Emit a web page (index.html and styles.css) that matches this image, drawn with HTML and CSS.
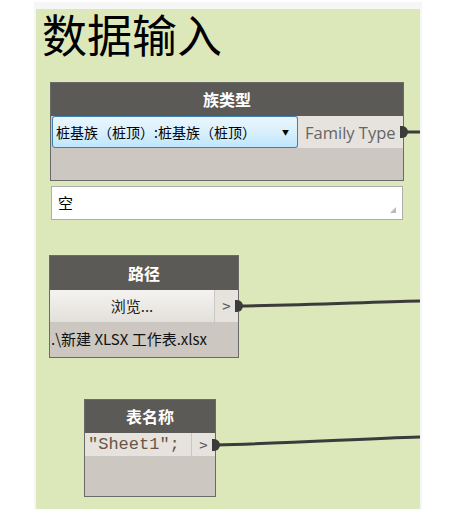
FILE: index.html
```html
<!DOCTYPE html>
<html lang="zh">
<head>
<meta charset="UTF-8" />
<title>数据输入</title>
<link rel="stylesheet" href="styles.css">
</head>
<body>
  <!-- Cadre du groupe -->
  <div class="group">
    <div class="canvas">
      <h1 class="group-title">数据输入</h1>

      <!-- Fils entre noeuds -->
      <svg class="wires" width="384" height="500">
        <path d="M367 123 L384 123" />
        <path d="M202 297 C280 296 330 293 384 292" />
        <path d="M179 436 C260 434 320 430 384 428" />
      </svg>

      <!-- Noeud famille -->
      <div class="node node-family">
        <div class="node-header">族类型</div>
        <div class="node-row">
          <div class="dropdown">
            <span>桩基族（桩顶）:桩基族（桩顶）</span>
            <span class="caret">&#9660;</span>
          </div>
          <div class="port-label">Family Type</div>
          <span class="port"></span>
        </div>
      </div>

      <!-- Zone de texte -->
      <div class="textbox">空<span class="grip"></span></div>

      <!-- Noeud chemin -->
      <div class="node node-path">
        <div class="node-header">路径</div>
        <div class="node-row">
          <div class="browse">浏览...</div>
          <div class="out">&gt;</div>
          <span class="port"></span>
        </div>
        <div class="node-value">.\新建 XLSX 工作表.xlsx</div>
      </div>

      <!-- Noeud nom de feuille -->
      <div class="node node-sheet">
        <div class="node-header">表名称</div>
        <div class="node-row">
          <div class="code">"Sheet1";</div>
          <div class="out">&gt;</div>
          <span class="port"></span>
        </div>
      </div>
    </div>
  </div>
</body>
</html>
```

FILE: styles.css
```css
/* ===== Global ===== */
html, body {
  margin: 0;
  background: #fff;
  font-family: "Noto Sans CJK SC", "Noto Sans", sans-serif;
}
/* Cadre gris + fond vert */
.group {
  margin: 2px 0 0 34px;
  width: 384px;
  padding: 7px 2px 0 2px;
  background: #f6f6f6;
}
.canvas {
  position: relative;
  width: 384px;
  height: 500px;
  background: #dde8ba;
}
.group-title {
  margin: 0;
  padding: 0 0 0 6px;
  font-size: 45px;
  font-weight: normal;
  line-height: 50px;
  color: #000;
}
/* Fils */
.wires {
  position: absolute;
  left: 0;
  top: 0;
}
.wires path {
  fill: none;
  stroke: #3b3b3b;
  stroke-width: 3;
}
/* Noeuds */
.node {
  position: absolute;
  background: #ccc7c0;
  border: 1px solid #6a6a6a;
  box-sizing: border-box;
}
.node-header {
  height: 33px;
  line-height: 33px;
  background: #5c5a57;
  color: #fff;
  text-align: center;
  font-size: 16px;
  font-weight: bold;
}
.node-row {
  position: relative;
  display: flex;
  height: 32px;
}
.port {
  position: absolute;
  right: -5px;
  top: 10px;
  width: 8px;
  height: 12px;
  border-radius: 0 6px 6px 0;
  background: #3b3b3b;
}
.node-family {
  left: 14px;
  top: 73px;
  width: 354px;
  height: 99px;
}
.dropdown {
  flex: 1;
  display: flex;
  align-items: center;
  justify-content: space-between;
  padding: 0 8px 0 3px;
  margin-left: 1px;
  border: 1px solid #3c7fb1;
  border-radius: 3px;
  background: linear-gradient(#eaf6fd, #d9f0fc 50%, #bee6fd);
  font-size: 14px;
  color: #000;
}
.caret {
  font-size: 7px;
}
.port-label {
  width: 98px;
  padding-left: 7px;
  line-height: 33px;
  background: #e6e2dd;
  color: #666;
  font-family: "Open Sans", "Noto Sans", sans-serif;
  font-size: 16.5px;
  white-space: nowrap;
  overflow: hidden;
}
/* Zone texte */
.textbox {
  position: absolute;
  left: 15px;
  top: 177px;
  width: 352px;
  height: 34px;
  box-sizing: border-box;
  border: 1px solid #adadad;
  background: #fff;
  padding: 4px 6px;
  font-size: 15px;
  line-height: 24px;
}
.grip {
  position: absolute;
  right: 6px;
  bottom: 6px;
  width: 0;
  height: 0;
  border-left: 6px solid transparent;
  border-bottom: 6px solid #bbb;
}
/* Noeud chemin */
.node-path {
  left: 13px;
  top: 246px;
  width: 190px;
  height: 103px;
}
.node-path .node-header {
  height: 34px;
  line-height: 34px;
}
.browse {
  flex: 1;
  text-align: center;
  line-height: 32px;
  background: linear-gradient(#f4f3f1, #e3e0db);
  font-size: 15px;
  color: #222;
  border-right: 1px solid #ccc7c0;
}
.out {
  width: 23px;
  text-align: center;
  line-height: 32px;
  background: #e6e2dd;
  color: #555;
  font-size: 15px;
}
.node-value {
  padding-left: 1px;
  line-height: 34px;
  font-size: 15px;
  color: #111;
  white-space: nowrap;
}
/* Noeud nom de feuille */
.node-sheet {
  left: 48px;
  top: 390px;
  width: 132px;
  height: 98px;
}
.node-sheet .node-row {
  height: 23px;
}
.node-sheet .port {
  top: 6px;
}
.node-sheet .out {
  line-height: 23px;
  border-left: 1px solid #ccc7c0;
}
.code {
  flex: 1;
  padding-left: 3px;
  line-height: 23px;
  background: #e6e2dd;
  font-family: "Liberation Mono", monospace;
  font-size: 17px;
  color: #6a5646;
  white-space: nowrap;
  overflow: hidden;
}
```
